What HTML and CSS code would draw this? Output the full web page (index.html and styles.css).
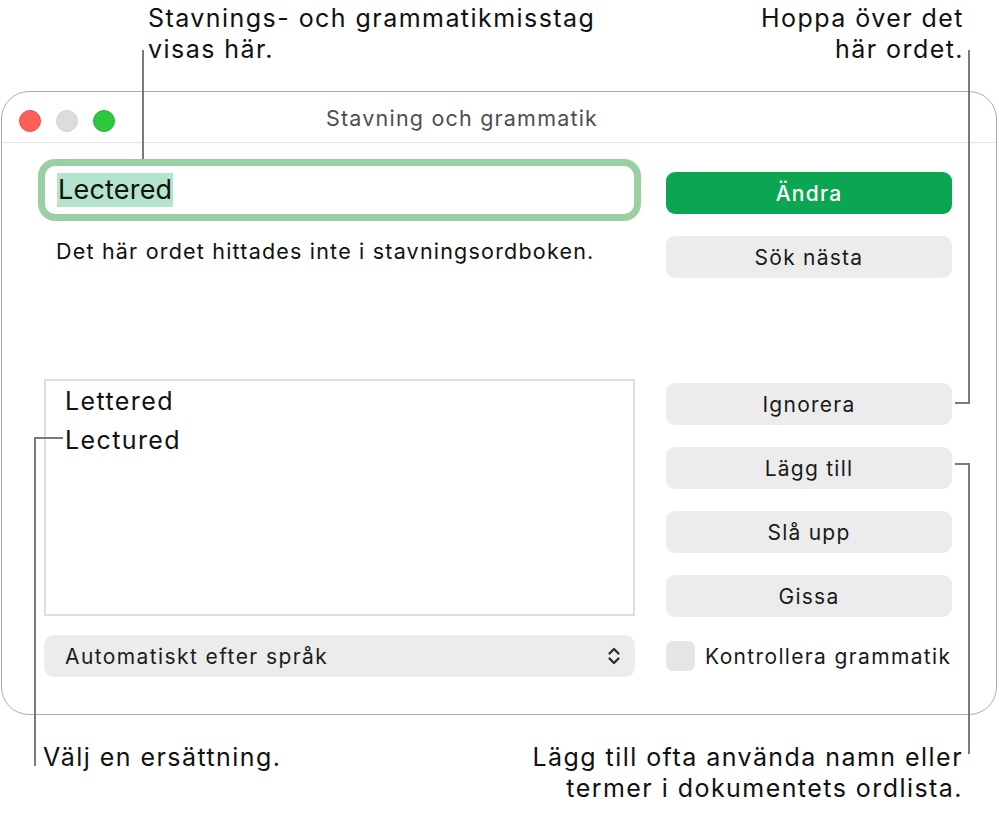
FILE: index.html
```html
<!DOCTYPE html>
<html lang="sv">
<head>
    <meta charset="UTF-8">
    <meta name="viewport" content="width=device-width, initial-scale=1.0">
    <title>Stavning och grammatik</title>
    <link rel="stylesheet" href="styles.css">
</head>
<body>
    <div class="stage">
        <div class="window">
            <div class="titlebar">
                <div class="lights">
                    <span class="light close"></span>
                    <span class="light minimize"></span>
                    <span class="light zoom"></span>
                </div>
                <div class="title">Stavning och grammatik</div>
            </div>

            <div class="panel">
                <div class="col-left">
                    <div class="field"><span class="selected">Lectered</span></div>
                    <p class="status">Det här ordet hittades inte i stavningsordboken.</p>
                    <ul class="guesses">
                        <li>Lettered</li>
                        <li>Lectured</li>
                    </ul>
                    <div class="popup">
                        <span>Automatiskt efter språk</span>
                        <svg class="chevrons" width="14" height="20" viewBox="0 0 14 20">
                            <path d="M2.5 7.5 L7 3 L11.5 7.5" />
                            <path d="M2.5 12.5 L7 17 L11.5 12.5" />
                        </svg>
                    </div>
                </div>

                <div class="col-right">
                    <button class="btn primary">Ändra</button>
                    <button class="btn">Sök nästa</button>
                    <button class="btn gap-big">Ignorera</button>
                    <button class="btn">Lägg till</button>
                    <button class="btn">Slå upp</button>
                    <button class="btn">Gissa</button>
                    <label class="check">
                        <span class="box"></span>
                        Kontrollera grammatik
                    </label>
                </div>
            </div>
        </div>

        <!-- callout labels -->
        <div class="note note-field">Stavnings- och grammatikmisstag<br>visas här.</div>
        <div class="note note-ignore">Hoppa över det<br>här ordet.</div>
        <div class="note note-pick">Välj en ersättning.</div>
        <div class="note note-learn">Lägg till ofta använda namn eller<br>termer i dokumentets ordlista.</div>

        <!-- callout leader lines -->
        <svg class="leaders" width="999" height="817" viewBox="0 0 999 817">
            <path d="M143 50 V159" />
            <path d="M969 50 V403 H955" />
            <path d="M955 464 H969 V754" />
            <path d="M63 438 H35 V766" />
        </svg>
    </div>
</body>
</html>
```

FILE: styles.css
```css
* {
    box-sizing: border-box;
}
body {
    margin: 0;
    background: #fff;
    color: #111;
    font-family: 'Inter', 'Noto Sans', sans-serif;
}
.stage {
    position: relative;
    width: 999px;
    height: 817px;
    padding-top: 91px;
    padding-left: 1px;
}
.window {
    width: 996px;
    height: 624px;
    border: 1.5px solid #ababab;
    border-radius: 28px;
    background: #fff;
}
.titlebar {
    height: 51px;
    padding-top: 2px;
    border-bottom: 1.5px solid #e6e6e6;
    display: flex;
    align-items: center;
}
.lights {
    display: flex;
    gap: 15px;
    margin-left: 17px;
    margin-top: 6px;
}
.light {
    width: 22px;
    height: 22px;
    border-radius: 50%;
}
.close {
    background: #fe5f57;
    border: 1px solid #ec4d46;
}
.minimize {
    background: #dcdcdc;
    border: 1px solid #d2d2d2;
}
.zoom {
    background: #2bc840;
    border: 1px solid #20b136;
}
.title {
    margin-left: 211px;
    font-size: 21.5px;
    letter-spacing: 1.2px;
    color: #4e4e4e;
}
.panel {
    display: flex;
    gap: 31px;
    padding-left: 42px;
}
.col-left {
    width: 591px;
    display: flex;
    flex-direction: column;
}
.field {
    margin-top: 23px;
    height: 48px;
    margin-left: 1px;
    margin-right: 1px;
    border-radius: 10px;
    box-shadow: 0 0 0 7px #9acfa2;
    background: #fff;
    display: flex;
    align-items: center;
    padding-left: 12px;
    font-size: 27px;
    letter-spacing: 0.2px;
}
.selected {
    background: #b2e5cc;
    padding: 0 1px;
    line-height: 34px;
}
.status {
    margin: 25px 0 0 12px;
    font-size: 21.5px;
    letter-spacing: 1.2px;
    line-height: 24px;
}
.guesses {
    list-style: none;
    margin: 116px 0 0;
    padding: 1px 0 0 19px;
    height: 237px;
    border: 2px solid #dedede;
    font-size: 25px;
    letter-spacing: 1.4px;
}
.guesses li {
    line-height: 39px;
}
.popup {
    margin-top: 19px;
    height: 42px;
    border-radius: 10px;
    background: #ececec;
    display: flex;
    align-items: center;
    justify-content: space-between;
    padding: 0 14px 0 21px;
    font-size: 21px;
    letter-spacing: 1.4px;
    color: #1c1c1c;
}
.chevrons path {
    fill: none;
    stroke: #2a2a2a;
    stroke-width: 2.2;
    stroke-linecap: round;
    stroke-linejoin: round;
}
.col-right {
    width: 286px;
    display: flex;
    flex-direction: column;
    gap: 22px;
    padding-top: 29px;
}
.btn {
    height: 42px;
    border: none;
    border-radius: 9px;
    background: #ececec;
    color: #1a1a1a;
    font-family: inherit;
    font-size: 21px;
    letter-spacing: 1.25px;
    padding: 0;
}
.btn.primary {
    background: #0aa651;
    color: #fff;
    font-weight: 500;
}
.btn.gap-big {
    margin-top: 83px;
}
.check {
    display: flex;
    align-items: center;
    gap: 10px;
    margin-top: 2px;
    font-size: 21px;
    letter-spacing: 1.35px;
    white-space: nowrap;
    color: #1a1a1a;
}
.box {
    flex: none;
    width: 29px;
    height: 30px;
    border-radius: 7px;
    background: #e6e6e6;
}
.note {
    position: absolute;
    font-size: 25px;
    line-height: 31px;
    letter-spacing: 1.45px;
    color: #111;
}
.note-field {
    left: 148px;
    top: 3px;
}
.note-ignore {
    right: 35px;
    top: 3px;
    text-align: right;
}
.note-pick {
    left: 43px;
    top: 742px;
}
.note-learn {
    right: 36px;
    top: 742px;
    text-align: right;
}
.leaders {
    position: absolute;
    left: 0;
    top: 0;
    pointer-events: none;
}
.leaders path {
    fill: none;
    stroke: #7a7a7a;
    stroke-width: 2;
}
```
